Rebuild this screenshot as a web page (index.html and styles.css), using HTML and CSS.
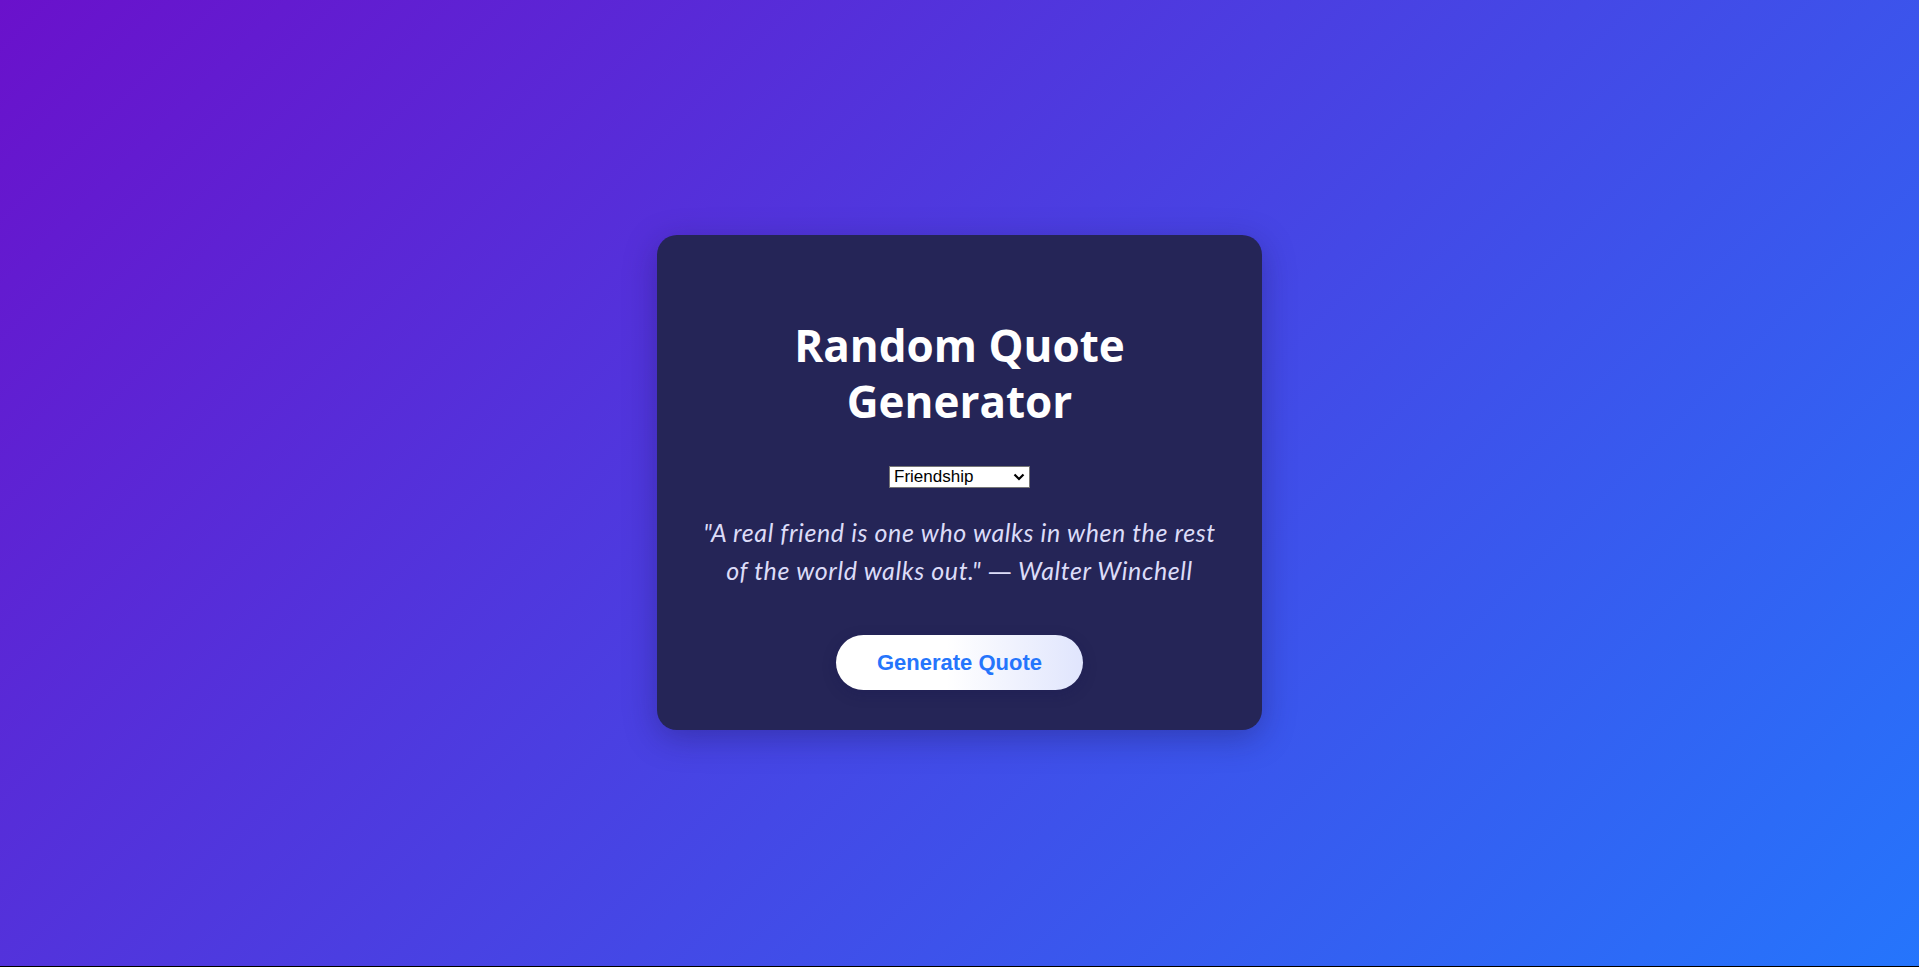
FILE: index.html
```html
<!DOCTYPE html>
<html lang="en">
<head>
<meta charset="utf-8">
<title>Random Quote Generator</title>
<link rel="stylesheet" href="styles.css">
</head>
<body>
<main class="page">
  <section class="card">
    <h1 class="title">Random Quote Generator</h1>
    <select class="category">
      <option>Inspiration</option>
      <option selected>Friendship</option>
      <option>Life</option>
      <option>Success</option>
      <option>Motivation</option>
    </select>
    <p class="quote">"A real friend is one who walks in when the rest of the world walks out." <span class="dash">—</span> Walter Winchell</p>
    <button class="generate">Generate Quote</button>
  </section>
</main>
</body>
</html>
```
FILE: styles.css
```css
html {
  background: #000;
}
body {
  margin: 0;
}
.page {
  height: calc(100vh - 1px);
  box-sizing: border-box;
  padding-bottom: 1px;
  background: linear-gradient(135deg, #6a11cb 0%, #2575fc 100%);
  display: flex;
  align-items: center;
  justify-content: center;
}
.card {
  width: 605px;
  box-sizing: border-box;
  padding: 40px 38px;
  background: #252557;
  border-radius: 20px;
  box-shadow: 0 8px 32px rgba(25, 20, 80, 0.35);
  display: flex;
  flex-direction: column;
  align-items: center;
  text-align: center;
}
.title {
  margin: 42px 0 0;
  font-family: "Open Sans", "Noto Sans", sans-serif;
  font-weight: 700;
  font-size: 44px;
  line-height: 56px;
  color: #ffffff;
}
.category {
  margin-top: 37px;
  width: 141px;
  height: 22px;
  box-sizing: border-box;
  font-family: "Liberation Sans", Arial, sans-serif;
  font-size: 17px;
  line-height: 20px;
  color: #000;
  background-color: #fff;
  background-image: url("data:image/svg+xml,%3Csvg xmlns='http://www.w3.org/2000/svg' width='12' height='8' viewBox='0 0 12 8'%3E%3Cpath d='M1.5 1.5 L6 6 L10.5 1.5' fill='none' stroke='%23000' stroke-width='2.2'/%3E%3C/svg%3E");
  background-repeat: no-repeat;
  background-position: right 4px center;
  border: 1px solid #767676;
  border-radius: 0;
  padding: 0 18px 0 4px;
  appearance: none;
  -webkit-appearance: none;
}
.quote {
  margin: 25px 0 0;
  font-family: Lato, "Noto Sans", sans-serif;
  font-style: italic;
  font-size: 25px;
  letter-spacing: 0.6px;
  line-height: 38px;
  color: #dcdcf8;
}
.dash {
  font-family: "DejaVu Sans", sans-serif;
  font-style: normal;
  font-size: 24px;
  line-height: 1;
  letter-spacing: 0;
}
.generate {
  margin-top: 46px;
  height: 55px;
  padding: 0 41px;
  border: none;
  border-radius: 28px;
  background: linear-gradient(90deg, #ffffff 45%, #e0e5fd 100%);
  color: #2575fc;
  font-family: "Liberation Sans", Arial, sans-serif;
  font-weight: 700;
  font-size: 22px;
  box-shadow: 0 4px 14px rgba(20, 20, 80, 0.25);
  cursor: pointer;
}
```
